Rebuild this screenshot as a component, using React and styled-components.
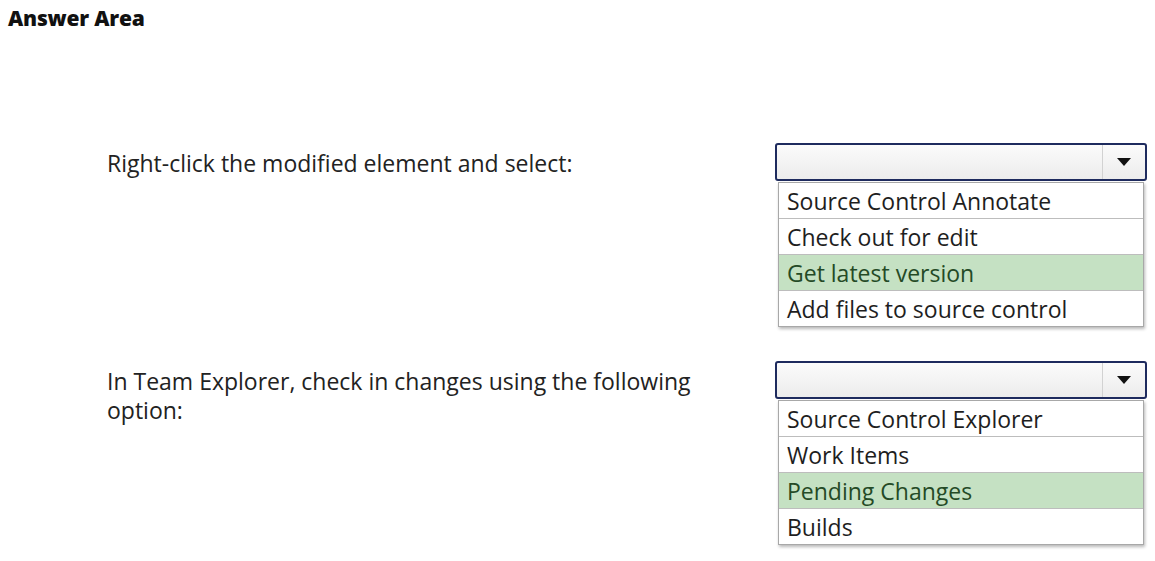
import styled, { createGlobalStyle } from "styled-components";

const GlobalStyle = createGlobalStyle`
  body {
    margin: 0;
    background: #ffffff;
    font-family: "Open Sans", "Noto Sans", sans-serif;
    color: #222222;
  }
`;

const Page = styled.div`
  padding: 6px 8px 20px 8px;
`;

const Title = styled.h1`
  margin: 0;
  font-size: 21px;
  line-height: 24px;
  font-weight: 800;
  color: #111111;
  letter-spacing: -0.2px;
`;

const Questions = styled.div`
  margin-top: 113px;
  padding-left: 99px;
  display: flex;
  flex-direction: column;
  gap: 34px;
`;

const Row = styled.div`
  display: grid;
  grid-template-columns: 668px 372px;
  align-items: start;
`;

const Label = styled.div`
  padding-top: 6px;
  font-size: 23px;
  line-height: 29px;
  color: #222222;
  width: 600px;
`;

const Select = styled.div`
  display: flex;
  flex-direction: column;
`;

const Box = styled.div`
  height: 34px;
  border: 2px solid #1e2b5e;
  border-radius: 3px;
  background: linear-gradient(#fbfbfb, #ececec);
  display: flex;
  justify-content: flex-end;
`;

const Arrow = styled.div`
  width: 42px;
  border-left: 1px solid #d2d2d2;
  display: flex;
  align-items: center;
  justify-content: center;

  &::after {
    content: "";
    border-left: 7px solid transparent;
    border-right: 7px solid transparent;
    border-top: 8px solid #111111;
  }
`;

const List = styled.ul`
  margin: 1px 3px 0 3px;
  padding: 0;
  list-style: none;
  border: 1px solid #a8a8a8;
  background: #ffffff;
  box-shadow: 1px 2px 3px rgba(0, 0, 0, 0.28);
`;

const Item = styled.li`
  height: 35px;
  padding-left: 8px;
  display: flex;
  align-items: center;
  font-size: 23px;
  background: ${({ $picked }) => ($picked ? "#c5e1c3" : "#ffffff")};
  color: ${({ $picked }) => ($picked ? "#244a26" : "#1e1e1e")};
  border-bottom: 1px solid #bdbdbd;

  &:last-child {
    border-bottom: none;
  }
`;

const questions = [
  {
    label: "Right-click the modified element and select:",
    options: [
      "Source Control Annotate",
      "Check out for edit",
      "Get latest version",
      "Add files to source control",
    ],
    picked: 2,
  },
  {
    label: "In Team Explorer, check in changes using the following option:",
    options: ["Source Control Explorer", "Work Items", "Pending Changes", "Builds"],
    picked: 2,
  },
];

export default function App() {
  return (
    <>
      <GlobalStyle />
      <Page>
        <Title>Answer Area</Title>
        <Questions>
          {questions.map((q) => (
            <Row key={q.label}>
              <Label>{q.label}</Label>
              <Select>
                <Box>
                  <Arrow />
                </Box>
                <List>
                  {q.options.map((opt, i) => (
                    <Item key={opt} $picked={i === q.picked}>
                      {opt}
                    </Item>
                  ))}
                </List>
              </Select>
            </Row>
          ))}
        </Questions>
      </Page>
    </>
  );
}
